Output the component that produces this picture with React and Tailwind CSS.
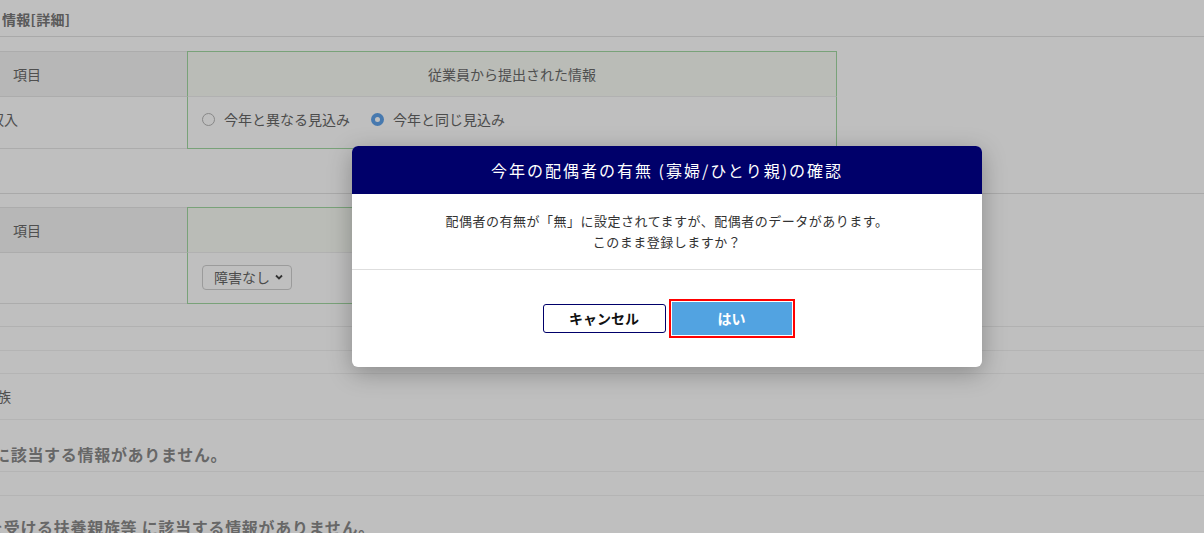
import React from "react";

const FONT = { fontFamily: "'Noto Sans CJK JP', 'Noto Sans', sans-serif" };

function Radio({ checked, label }) {
  return (
    <label className="flex items-center gap-[9px]">
      {checked ? (
        <span className="flex h-[13px] w-[13px] items-center justify-center rounded-full bg-[#5fa2ea]">
          <span className="h-[5px] w-[5px] rounded-full bg-white" />
        </span>
      ) : (
        <span className="h-[13px] w-[13px] rounded-full border border-[#b5b5b5] bg-white" />
      )}
      <span className="text-[14px] text-[#666]">{label}</span>
    </label>
  );
}

function Table({ right, bodyLeft, bodyRight, bodyH, bodyPad }) {
  return (
    <div className="flex flex-col">
      <div className="flex h-[46px]">
        <div className="flex w-[187px] items-center border-y border-[#e6e6e6] bg-[#f5f5f5] pl-[13px] text-[14px] text-[#6a6a6a]">
          項目
        </div>
        <div className="flex w-[650px] items-center justify-center border-x border-t border-b border-x-[#a2d8a2] border-t-[#a2d8a2] border-b-[#ececec] bg-[#f8fbf5] text-[14px] text-[#6a6a6a]">
          {right}
        </div>
      </div>
      <div className="flex" style={{ height: bodyH }}>
        <div className={`flex w-[187px] items-center overflow-hidden border-b border-[#e6e6e6] text-[14px] text-[#6a6a6a] ${bodyPad}`}>
          {bodyLeft}
        </div>
        <div className={`flex w-[650px] items-center border-x border-b border-[#a2d8a2] pl-[14px] ${bodyPad}`}>
          {bodyRight}
        </div>
      </div>
    </div>
  );
}

export default function App() {
  return (
    <div className="relative h-[533px] w-[1204px] overflow-hidden bg-white" style={FONT}>
      {/* page */}
      <div className="flex flex-col">
        <div className="h-[37px] border-b border-[#e2e2e2] pl-[2px] pt-[9px] text-[14px] font-bold leading-[20px] tracking-[0.3px] text-[#787878]">
          情報[詳細]
        </div>
        <div className="mt-[14px]">
          <Table
            right="従業員から提出された情報"
            bodyH={52}
            bodyPad="pb-[6px]"
            bodyLeft={<span className="-ml-[10px]">収入</span>}
            bodyRight={
              <div className="flex items-center gap-[21px]">
                <Radio label="今年と異なる見込み" />
                <Radio checked label="今年と同じ見込み" />
              </div>
            }
          />
        </div>
        <div className="h-[45px] border-b border-[#e2e2e2]" />
        <div className="mt-[13px]">
          <Table
            right=""
            bodyH={51}
            bodyPad="pb-[2px]"
            bodyLeft={null}
            bodyRight={
              <div className="flex h-[25px] w-[90px] items-center justify-between rounded-[4px] border border-[#cfcfcf] bg-white pl-[11px] pr-[7px] text-[14px] text-[#666]">
                <span>障害なし</span>
                <svg width="10" height="10" viewBox="0 0 10 10">
                  <path d="M2 3.5 L5 6.5 L8 3.5" fill="none" stroke="#444" strokeWidth="1.8" />
                </svg>
              </div>
            }
          />
        </div>
        <div className="h-[23px] border-b border-[#ededed]" />
        <div className="h-[24px] border-b border-[#f0f0f0]" />
        <div className="h-[23px] border-b border-[#f0f0f0]" />
        <div className="flex h-[46px] items-center border-b border-[#f0f0f0] text-[14px] text-[#6a6a6a]">
          <span className="-ml-[3px]">族</span>
        </div>
        <div className="h-[52px] border-b border-[#f0f0f0] pt-[23px] text-[16px] font-bold leading-[22px] tracking-[0.7px] text-[#8a8a8a]">
          <span className="-ml-[6px] inline-block">に該当する情報がありません。</span>
        </div>
        <div className="h-[24px] border-b border-[#f0f0f0]" />
        <div className="pt-[20px] text-[16px] font-bold leading-[22px] tracking-[0.7px] text-[#8a8a8a]">
          <span className="-ml-[13px] inline-block">を受ける扶養親族等 に該当する情報がありません。</span>
        </div>
      </div>

      {/* overlay */}
      <div className="absolute inset-0 bg-black/25" />

      {/* modal */}
      <div className="absolute left-[352px] top-[146px] w-[630px] rounded-[6px] bg-white shadow-[0_6px_24px_rgba(0,0,0,0.28)]">
        <div className="flex h-[48px] items-center justify-center rounded-t-[6px] bg-[#00006a] text-[16px] tracking-[2px] text-white">
          今年の配偶者の有無 (寡婦/ひとり親)の確認
        </div>
        <div className="h-[76px] border-b border-[#dedede] pt-[16px] text-center text-[13px] leading-[21px] tracking-[0.5px] text-[#333]">
          <div>配偶者の有無が「無」に設定されてますが、配偶者のデータがあります。</div>
          <div>このまま登録しますか？</div>
        </div>
        <div className="flex h-[97px] items-center justify-center gap-[3px] pl-[3px]">
          <button className="h-[29px] w-[123px] rounded-[3px] border border-[#00006a] bg-white text-[14px] font-bold text-[#111]">
            キャンセル
          </button>
          <div className="border-2 border-[#ff0000] bg-white p-[1px]">
            <button className="h-[33px] w-[120px] bg-[#52a3e1] text-[14px] font-bold text-white">
              はい
            </button>
          </div>
        </div>
      </div>
    </div>
  );
}
